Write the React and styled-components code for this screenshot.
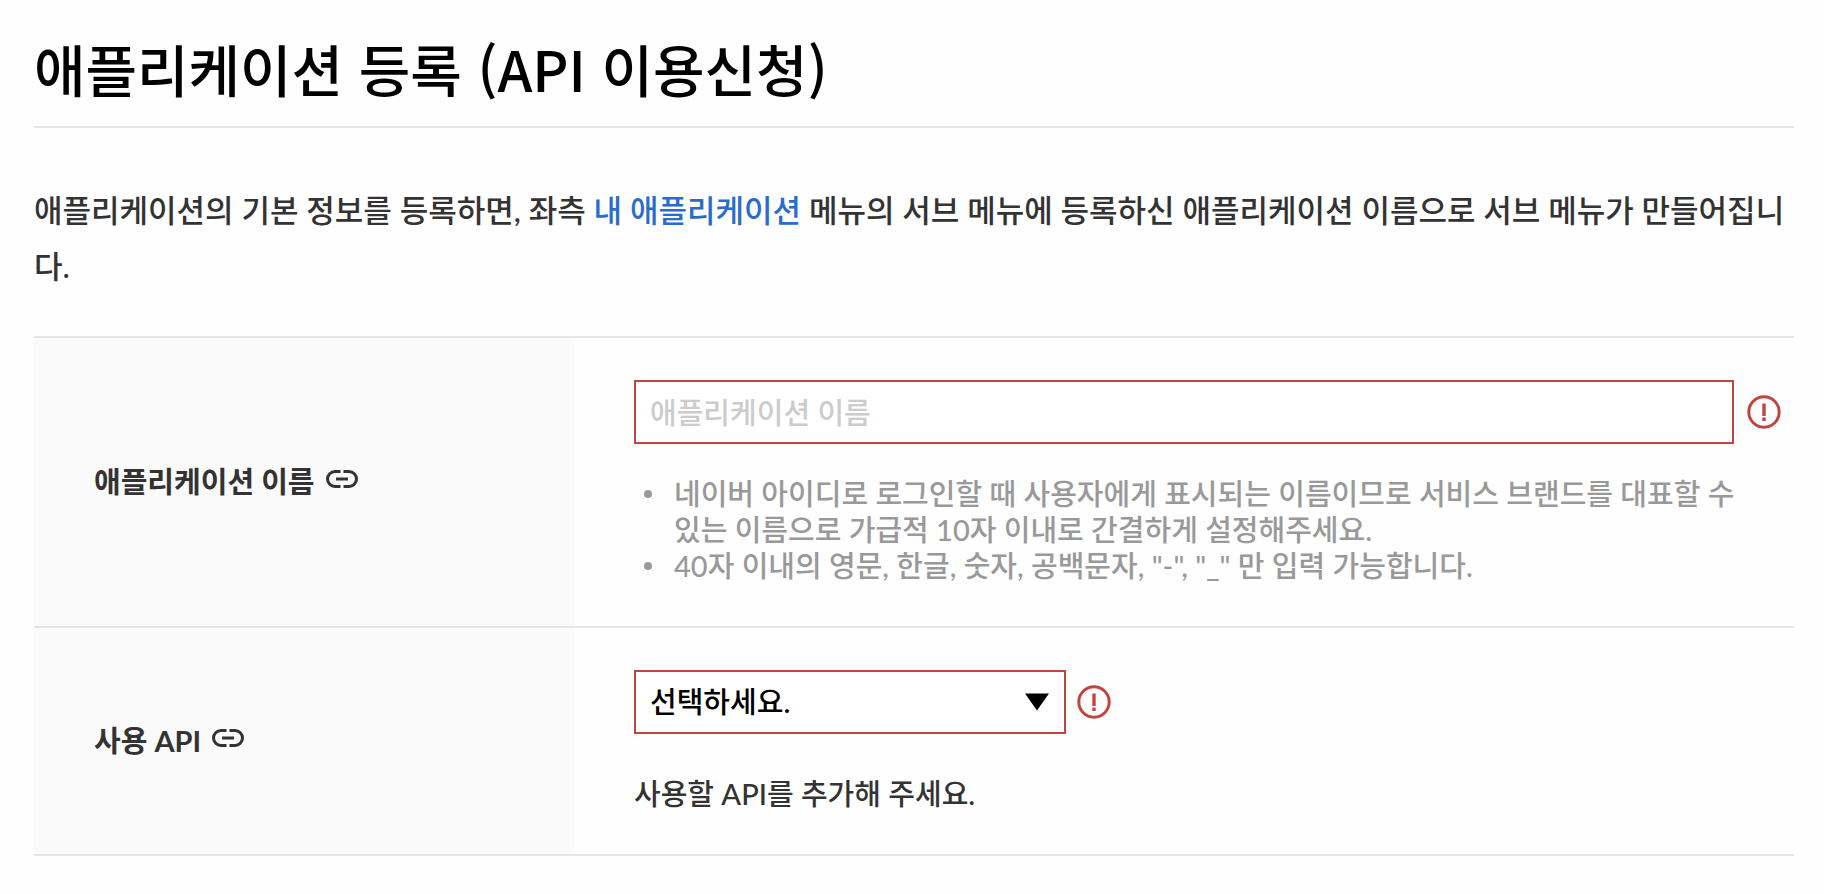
import React from 'react';
import styled, { createGlobalStyle } from 'styled-components';

const Global = createGlobalStyle`
  *, *::before, *::after { box-sizing: border-box; }
  body {
    margin: 0;
    background: #fefefe;
    color: #333;
    font-family: Lato, "Noto Sans CJK KR", sans-serif;
    font-size: 29px;
    font-weight: 500;
    line-height: 36px;
  }
`;

const Page = styled.main`
  padding: 28px 30px 32px 34px;
`;

const Title = styled.h1`
  margin: 0 0 54px;
  padding-bottom: 18px;
  border-bottom: 2px solid #e6e6e6;
  color: #000;
  font-family: "Noto Sans CJK KR", sans-serif;
  font-size: 56px;
  font-weight: 500;
  line-height: 80px;
`;

const Intro = styled.p`
  margin: 0 0 42px;
  font-size: 31px;
  line-height: 56px;
  word-break: break-all;
`;

const MenuLink = styled.a`
  color: #2a6ccb;
  text-decoration: none;
`;

const Form = styled.form`
  border-top: 2px solid #e6e6e6;
`;

const Row = styled.div`
  display: flex;
  border-bottom: 2px solid #e6e6e6;
`;

const LabelCell = styled.div`
  display: flex;
  flex: none;
  align-items: center;
  gap: 10px;
  width: 540px;
  padding-left: 60px;
  background: #fafafa;
`;

const Label = styled.label`
  font-weight: 700;
`;

const HelpLink = styled.a`
  display: flex;
  color: #333;
`;

const Content = styled.div`
  flex: 1;
  min-width: 0;
  padding: 42px 12px 42px 60px;
`;

const Field = styled.div`
  display: flex;
  align-items: center;
  gap: ${({ $gap }) => $gap}px;
`;

const NameInput = styled.input`
  flex: 1;
  min-width: 0;
  height: 64px;
  padding: 0 14px;
  border: 2px solid #c04540;
  border-radius: 0;
  background: #fff;
  color: #000;
  font: inherit;
  outline: none;

  &::placeholder {
    color: #ccc;
    opacity: 1;
  }
`;

const SelectBox = styled.div`
  display: grid;
  align-items: center;
  width: 432px;

  & > * { grid-area: 1 / 1; }
  & > svg {
    justify-self: end;
    margin-right: 16px;
    pointer-events: none;
  }
`;

const ApiSelect = styled.select`
  width: 100%;
  height: 64px;
  padding: 0 48px 0 14px;
  border: 2px solid #c04540;
  border-radius: 0;
  background: #fff;
  color: #000;
  font: inherit;
  appearance: none;
  outline: none;
`;

const Hints = styled.ul`
  margin: 32px 32px 0 0;
  padding-left: 40px;
  color: #999;
  list-style: none;
  word-break: keep-all;
`;

const Hint = styled.li`
  position: relative;

  &::before {
    content: "";
    position: absolute;
    top: 14px;
    left: -30px;
    width: 8px;
    height: 8px;
    border-radius: 50%;
    background: #999;
  }
`;

const Note = styled.p`
  margin: 42px 0 0;
`;

const LinkIcon = () => (
  <svg width="34" height="24" viewBox="0 0 34 24" fill="none" stroke="currentColor" strokeWidth="3" aria-hidden="true">
    <path d="M15.500 1.500H10a7.500 7.500 0 0 0 0 15h5.500M18.500 1.500H24a7.500 7.500 0 0 1 0 15h-5.500M11 9h12" />
  </svg>
);

const ErrorIcon = () => (
  <svg width="36" height="36" viewBox="0 0 36 36" fill="none" stroke="#c04540" strokeWidth="3" role="img" aria-label="오류">
    <circle cx="18" cy="18" r="15.200" />
    <path d="M18 9.500v12.500M18 23.500v3.500" strokeWidth="3.400" />
  </svg>
);

const Arrow = () => (
  <svg width="26" height="18" viewBox="0 0 26 18" aria-hidden="true">
    <path d="M1 0.500h24L13 17.500z" fill="#000" />
  </svg>
);

export default function App() {
  return (
    <>
      <Global />
      <Page lang="ko">
        <Title>애플리케이션 등록 (API 이용신청)</Title>
        <Intro>
          애플리케이션의 기본 정보를 등록하면, 좌측 <MenuLink href="#apps">내 애플리케이션</MenuLink> 메뉴의 서브 메뉴에
          등록하신 애플리케이션 이름으로 서브 메뉴가 만들어집니다.
        </Intro>
        <Form>
          <Row>
            <LabelCell>
              <Label htmlFor="app-name">애플리케이션 이름</Label>
              <HelpLink href="#app-name" aria-label="애플리케이션 이름 링크"><LinkIcon /></HelpLink>
            </LabelCell>
            <Content>
              <Field $gap={12}>
                <NameInput id="app-name" type="text" placeholder="애플리케이션 이름" />
                <ErrorIcon />
              </Field>
              <Hints>
                <Hint>
                  네이버 아이디로 로그인할 때 사용자에게 표시되는 이름이므로 서비스 브랜드를 대표할 수 있는 이름으로
                  가급적 10자 이내로 간결하게 설정해주세요.
                </Hint>
                <Hint>40자 이내의 영문, 한글, 숫자, 공백문자, "-", "_" 만 입력 가능합니다.</Hint>
              </Hints>
            </Content>
          </Row>
          <Row>
            <LabelCell>
              <Label htmlFor="api">사용 API</Label>
              <HelpLink href="#api" aria-label="사용 API 링크"><LinkIcon /></HelpLink>
            </LabelCell>
            <Content>
              <Field $gap={10}>
                <SelectBox>
                  <ApiSelect id="api" defaultValue="">
                    <option value="">선택하세요.</option>
                  </ApiSelect>
                  <Arrow />
                </SelectBox>
                <ErrorIcon />
              </Field>
              <Note>사용할 API를 추가해 주세요.</Note>
            </Content>
          </Row>
        </Form>
      </Page>
    </>
  );
}
